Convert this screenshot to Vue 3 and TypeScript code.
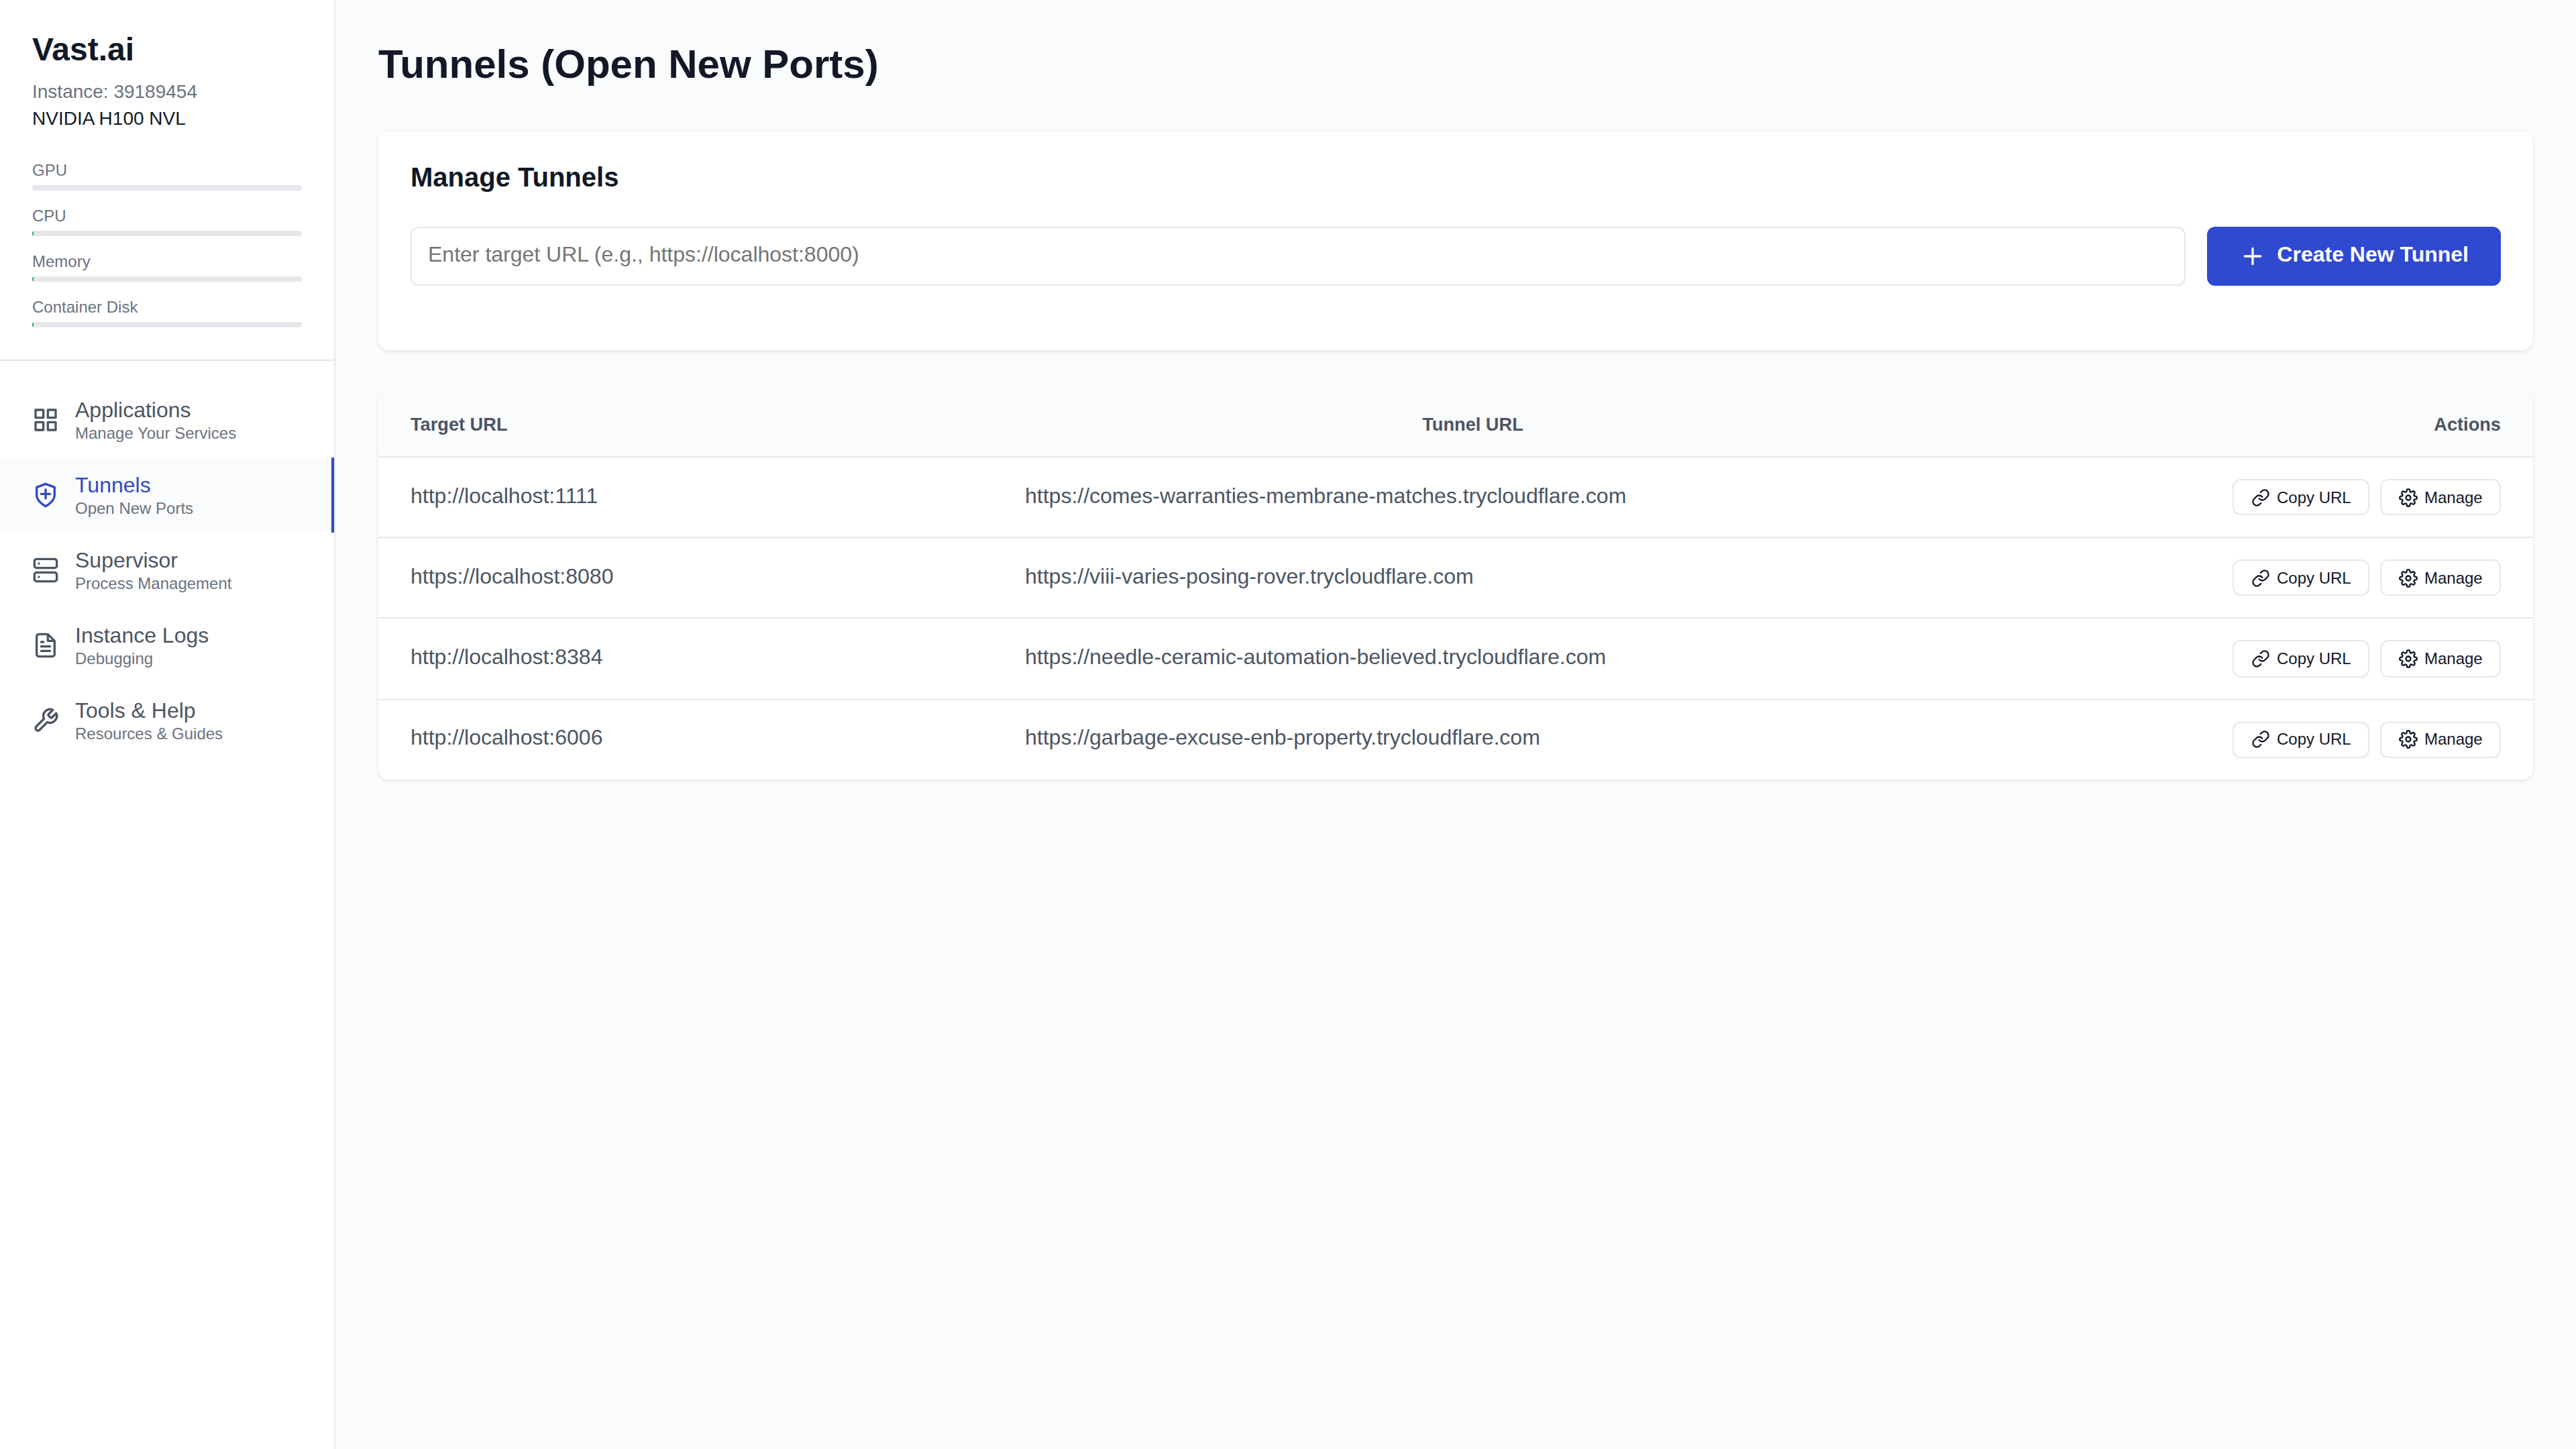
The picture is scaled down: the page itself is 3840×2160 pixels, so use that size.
<script setup lang="ts">
interface Meter {
  label: string
  value: number
}

interface NavItem {
  title: string
  subtitle: string
  icon: string
  active?: boolean
}

interface Tunnel {
  target: string
  url: string
}

const meters: Meter[] = [
  { label: 'GPU', value: 0 },
  { label: 'CPU', value: 0.5 },
  { label: 'Memory', value: 0.5 },
  { label: 'Container Disk', value: 0.5 },
]

const navItems: NavItem[] = [
  {
    title: 'Applications',
    subtitle: 'Manage Your Services',
    icon: 'M3 3h7v7H3z M14 3h7v7h-7z M14 14h7v7h-7z M3 14h7v7H3z',
  },
  {
    title: 'Tunnels',
    subtitle: 'Open New Ports',
    icon: 'M12 22s8-4 8-10V5l-8-3-8 3v7c0 6 8 10 8 10z M8 11h8 M12 7v8',
    active: true,
  },
  {
    title: 'Supervisor',
    subtitle: 'Process Management',
    icon: 'M4 2h16a2 2 0 0 1 2 2v4a2 2 0 0 1-2 2H4a2 2 0 0 1-2-2V4a2 2 0 0 1 2-2z M4 14h16a2 2 0 0 1 2 2v4a2 2 0 0 1-2 2H4a2 2 0 0 1-2-2v-4a2 2 0 0 1 2-2z M6 6h.01 M6 18h.01',
  },
  {
    title: 'Instance Logs',
    subtitle: 'Debugging',
    icon: 'M14 2H6a2 2 0 0 0-2 2v16a2 2 0 0 0 2 2h12a2 2 0 0 0 2-2V8z M14 2v6h6 M16 13H8 M16 17H8 M10 9H8',
  },
  {
    title: 'Tools & Help',
    subtitle: 'Resources & Guides',
    icon: 'M14.7 6.3a1 1 0 0 0 0 1.4l1.6 1.6a1 1 0 0 0 1.4 0l3.77-3.77a6 6 0 0 1-7.94 7.94l-6.91 6.91a2.12 2.12 0 0 1-3-3l6.91-6.91a6 6 0 0 1 7.94-7.94l-3.76 3.76z',
  },
]

const tunnels: Tunnel[] = [
  { target: 'http://localhost:1111', url: 'https://comes-warranties-membrane-matches.trycloudflare.com' },
  { target: 'https://localhost:8080', url: 'https://viii-varies-posing-rover.trycloudflare.com' },
  { target: 'http://localhost:8384', url: 'https://needle-ceramic-automation-believed.trycloudflare.com' },
  { target: 'http://localhost:6006', url: 'https://garbage-excuse-enb-property.trycloudflare.com' },
]
</script>

<template>
  <div class="layout">
    <aside class="sidebar">
      <header class="brand">
        <h1 class="brand-name">Vast.ai</h1>
        <p class="instance">Instance: 39189454</p>
        <p class="gpu-name">NVIDIA H100 NVL</p>
        <div class="meters">
          <div v-for="meter in meters" :key="meter.label" class="meter">
            <span class="meter-label">{{ meter.label }}</span>
            <div class="meter-track">
              <div class="meter-fill" :style="{ width: meter.value + '%' }"></div>
            </div>
          </div>
        </div>
      </header>
      <nav class="nav">
        <a v-for="item in navItems" :key="item.title" class="nav-item" :class="{ active: item.active }">
          <svg class="icon nav-icon" viewBox="0 0 24 24"><path :d="item.icon" /></svg>
          <span class="nav-text">
            <span class="nav-title">{{ item.title }}</span>
            <span class="nav-subtitle">{{ item.subtitle }}</span>
          </span>
        </a>
      </nav>
    </aside>

    <main class="main">
      <h2 class="page-title">Tunnels (Open New Ports)</h2>

      <section class="card manage">
        <h3 class="card-title">Manage Tunnels</h3>
        <div class="form">
          <input class="url-input" type="text" placeholder="Enter target URL (e.g., https://localhost:8000)" />
          <button class="create">
            <svg class="icon create-icon" viewBox="0 0 24 24"><path d="M12 5v14 M5 12h14" /></svg>
            <span class="create-label">Create New Tunnel</span>
          </button>
        </div>
      </section>

      <section class="card table">
        <div class="row head">
          <span class="cell">Target URL</span>
          <span class="cell center">Tunnel URL</span>
          <span class="cell right">Actions</span>
        </div>
        <div v-for="tunnel in tunnels" :key="tunnel.url" class="row body-row">
          <span class="cell">{{ tunnel.target }}</span>
          <span class="cell">{{ tunnel.url }}</span>
          <div class="cell actions">
            <button class="small-button">
              <svg class="icon small-icon" viewBox="0 0 24 24">
                <path d="M10 13a5 5 0 0 0 7.54.54l3-3a5 5 0 0 0-7.07-7.07l-1.72 1.71" />
                <path d="M14 11a5 5 0 0 0-7.54-.54l-3 3a5 5 0 0 0 7.07 7.07l1.71-1.71" />
              </svg>
              <span>Copy URL</span>
            </button>
            <button class="small-button">
              <svg class="icon small-icon" viewBox="0 0 24 24">
                <circle cx="12" cy="12" r="3" />
                <path
                  d="M19.4 15a1.65 1.65 0 0 0 .33 1.82l.06.06a2 2 0 0 1 0 2.83 2 2 0 0 1-2.83 0l-.06-.06a1.65 1.65 0 0 0-1.82-.33 1.65 1.65 0 0 0-1 1.51V21a2 2 0 0 1-2 2 2 2 0 0 1-2-2v-.09A1.65 1.65 0 0 0 9 19.4a1.65 1.65 0 0 0-1.82.33l-.06.06a2 2 0 0 1-2.83 0 2 2 0 0 1 0-2.83l.06-.06a1.65 1.65 0 0 0 .33-1.82 1.65 1.65 0 0 0-1.51-1H3a2 2 0 0 1-2-2 2 2 0 0 1 2-2h.09A1.65 1.65 0 0 0 4.6 9a1.65 1.65 0 0 0-.33-1.82l-.06-.06a2 2 0 0 1 0-2.83 2 2 0 0 1 2.83 0l.06.06a1.65 1.65 0 0 0 1.82.33H9a1.65 1.65 0 0 0 1-1.51V3a2 2 0 0 1 2-2 2 2 0 0 1 2 2v.09a1.65 1.65 0 0 0 1 1.51 1.65 1.65 0 0 0 1.82-.33l.06-.06a2 2 0 0 1 2.83 0 2 2 0 0 1 0 2.83l-.06.06a1.65 1.65 0 0 0-.33 1.82V9a1.65 1.65 0 0 0 1.51 1H21a2 2 0 0 1 2 2 2 2 0 0 1-2 2h-.09a1.65 1.65 0 0 0-1.51 1z"
                />
              </svg>
              <span>Manage</span>
            </button>
          </div>
        </div>
      </section>
    </main>
  </div>
</template>

<style>
body {
  margin: 0;
  background: #fafbfd;
}
</style>

<style scoped>
.layout {
  display: flex;
  height: 100vh;
  overflow: hidden;
  background: #fafbfd;
  color: #111827;
  font-family: 'Liberation Sans', Arial, sans-serif;
}

.layout * {
  box-sizing: border-box;
}

h1,
h2,
h3,
p {
  margin: 0;
}

button,
input {
  font-family: inherit;
}

.icon {
  flex: none;
  fill: none;
  stroke: currentColor;
  stroke-width: 2;
  stroke-linecap: round;
  stroke-linejoin: round;
}

/* Sidebar */
.sidebar {
  flex: none;
  width: 500px;
  background: #fff;
  border-right: 2px solid #e5e7eb;
}

.brand {
  height: 538px;
  padding: 45px 48px 48px;
  border-bottom: 2px solid #e5e7eb;
}

.brand-name {
  font-size: 48px;
  line-height: 57px;
}

.instance,
.gpu-name {
  font-size: 28px;
  line-height: 40px;
}

.instance {
  margin-top: 14.5px;
  color: #6b7280;
}

.meters {
  display: flex;
  flex-direction: column;
  gap: 24px;
  margin-top: 43.5px;
}

.meter {
  display: flex;
  flex-direction: column;
  gap: 9px;
}

.meter-label {
  font-size: 24px;
  line-height: 27px;
  color: #6b7280;
}

.meter-track {
  height: 8px;
  overflow: hidden;
  border-radius: 4px;
  background: #e5e7eb;
}

.meter-fill {
  height: 100%;
  background: #10b070;
}

.nav {
  padding-top: 32px;
}

.nav-item {
  display: flex;
  align-items: center;
  gap: 24px;
  height: 112px;
  padding: 0 48px;
  color: #4b5563;
}

.nav-item.active {
  padding-right: 44px;
  border-right: 4px solid #2f49c4;
  background: #fafbfd;
  color: #2f49c4;
}

.nav-icon {
  width: 40px;
  height: 40px;
}

.nav-text {
  display: flex;
  flex-direction: column;
  margin-top: 1px;
}

.nav-title {
  font-size: 32px;
  line-height: 38px;
}

.nav-subtitle {
  font-size: 24px;
  line-height: 31px;
  color: #6b7280;
}

/* Content */
.main {
  display: flex;
  flex: 1;
  flex-direction: column;
  gap: 64px;
  padding: 64px;
}

.page-title {
  height: 68px;
  font-size: 60px;
  line-height: 63px;
}

.card {
  border-radius: 16px;
  background: #fff;
  box-shadow: 0 2px 6px rgba(0, 0, 0, 0.1);
}

.manage {
  height: 326px;
  padding: 48px;
}

.card-title {
  margin-bottom: 54px;
  font-size: 40px;
  line-height: 40px;
}

.form {
  display: flex;
  gap: 32px;
  height: 88px;
}

.url-input {
  flex: 1;
  padding: 0 24px 6px;
  border: 2px solid #e5e7eb;
  border-radius: 12px;
  background: #fff;
  font-size: 32px;
}

.url-input::placeholder {
  color: #757575;
}

.create {
  display: flex;
  align-items: center;
  gap: 16px;
  padding: 0 48px;
  border: 0;
  border-radius: 12px;
  background: #2f49d1;
  color: #fff;
}

.create-icon {
  width: 40px;
  height: 40px;
}

.create-label {
  padding-bottom: 6px;
  font-size: 32px;
  font-weight: 700;
  line-height: 36px;
}

/* Table */
.table {
  overflow: hidden;
}

.row {
  display: grid;
  grid-template-columns: 916px 1431px 1fr;
  border-bottom: 2px solid #e5e7eb;
}

.cell {
  padding: 0 48px;
}

.head {
  align-items: center;
  height: 96px;
  padding-bottom: 1px;
  background: #fafbfd;
  color: #4b5563;
  font-size: 27.2px;
  font-weight: 700;
  line-height: 31px;
}

.center {
  text-align: center;
}

.right {
  text-align: right;
}

.body-row {
  align-items: start;
  height: 120px;
  padding-top: 32px;
  color: #4b5563;
  font-size: 32px;
  line-height: 50px;
}

.actions {
  display: flex;
  justify-content: flex-end;
  gap: 16px;
}

.small-button {
  display: flex;
  align-items: flex-start;
  gap: 10px;
  height: 54px;
  padding: 12px 25.3px 0 26px;
  border: 2px solid #e5e7eb;
  border-radius: 12px;
  background: #fff;
  color: #111827;
  font-size: 24px;
  line-height: 27px;
}

.small-icon {
  width: 28px;
  height: 28px;
}

.body-row:nth-child(4) {
  height: 122px;
}

.body-row:nth-child(4) .small-button {
  height: 56px;
}

.body-row:last-child {
  height: 118px;
  border-bottom: 0;
  line-height: 46px;
}

.body-row:last-child .small-button {
  padding-top: 10px;
}
</style>
